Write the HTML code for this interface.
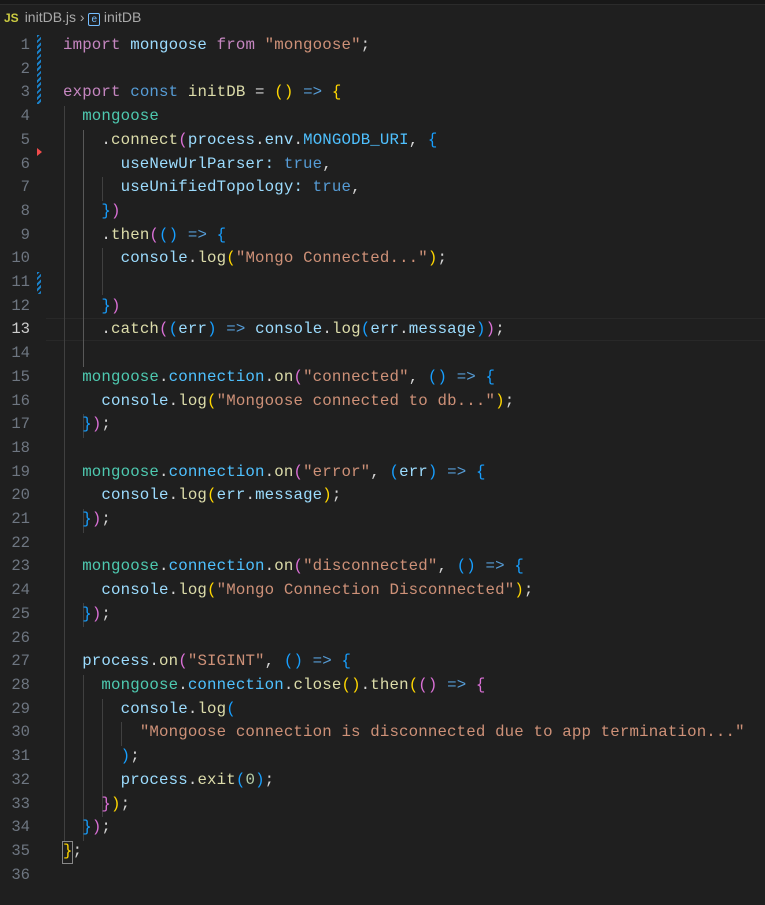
<!DOCTYPE html>
<html><head><meta charset="utf-8"><style>
html,body{margin:0;padding:0;background:#1f1f1f;width:765px;height:905px;overflow:hidden;}
body{position:relative;font-family:"Liberation Mono",monospace;}
.top{position:absolute;left:0;top:0;width:765px;height:4px;background:#181818;border-bottom:1px solid #2b2b2b;}
.bc{position:absolute;left:4px;top:9px;font-family:"Liberation Sans",sans-serif;font-size:14px;color:#a9a9a9;white-space:nowrap;}
.bc .js{color:#cbcb41;font-weight:bold;font-size:12px;margin-right:6px;}
.ln{position:absolute;left:0;width:30px;text-align:right;color:#6e7681;font-size:15.55px;line-height:23.71px;}
.code{position:absolute;left:63px;font-size:15.75px;letter-spacing:0.15px;line-height:23.71px;white-space:pre;color:#d4d4d4;}
.g{position:absolute;width:1px;background:#404040;}
.k{color:#c586c0}.b{color:#569cd6}.v{color:#9cdcfe}.f{color:#dcdcaa}.s{color:#ce9178}.t{color:#4ec9b0}.c{color:#4fc1ff}.n{color:#b5cea8}
.y{color:#ffd700}.p{color:#da70d6}.u{color:#179fff}
.hl{position:absolute;left:46px;width:719px;height:21px;border-top:1px solid #282828;border-bottom:1px solid #282828;}
.hatch{position:absolute;left:37px;width:4px;background:repeating-linear-gradient(135deg,#1b81c8 0 2px,transparent 2px 4px);}
</style></head><body>
<div class="top"></div>
<div class="bc"><span class="js">JS</span>initDB.js &#8250; <span style="color:#75beff;border:1px solid #75beff;font-size:10px;padding:0 2px;border-radius:2px">e</span> initDB</div>
<div class="hl" style="top:318px"></div>
<div class="hatch" style="top:35px;height:69px"></div>
<div class="hatch" style="top:272px;height:22px"></div>
<div style="position:absolute;left:37px;top:148px;width:0;height:0;border-top:4px solid transparent;border-bottom:4px solid transparent;border-left:5px solid #f14c4c"></div>
<div class="g" style="left:64px;top:106px;height:735px"></div>
<div class="g" style="left:83px;top:130px;height:237px;background:#585858"></div>
<div class="g" style="left:102px;top:177px;height:24px"></div>
<div class="g" style="left:102px;top:248px;height:47px"></div>
<div class="g" style="left:83px;top:414px;height:24px"></div>
<div class="g" style="left:83px;top:509px;height:24px"></div>
<div class="g" style="left:83px;top:603px;height:24px"></div>
<div class="g" style="left:83px;top:675px;height:166px"></div>
<div class="g" style="left:102px;top:699px;height:118px"></div>
<div class="g" style="left:121px;top:722px;height:24px"></div>
<div style="position:absolute;left:62px;top:841px;width:9px;height:21px;border:1px solid #888"></div>
<div class="ln" style="top:34px">1<br>2<br>3<br>4<br>5<br>6<br>7<br>8<br>9<br>10<br>11<br>12<br><span style="color:#ccc">13</span><br>14<br>15<br>16<br>17<br>18<br>19<br>20<br>21<br>22<br>23<br>24<br>25<br>26<br>27<br>28<br>29<br>30<br>31<br>32<br>33<br>34<br>35<br>36</div>
<div class="code" style="top:34px"><span class="k">import</span> <span class="v">mongoose</span> <span class="k">from</span> <span class="s">"mongoose"</span>;

<span class="k">export</span> <span class="b">const</span> <span class="f">initDB</span> = <span class="y">()</span> <span class="b">=&gt;</span> <span class="y">{</span>
  <span class="t">mongoose</span>
    .<span class="f">connect</span><span class="p">(</span><span class="v">process</span>.<span class="v">env</span>.<span class="c">MONGODB_URI</span>, <span class="u">{</span>
      <span class="v">useNewUrlParser</span><span class="v">:</span> <span class="b">true</span>,
      <span class="v">useUnifiedTopology</span><span class="v">:</span> <span class="b">true</span>,
    <span class="u">}</span><span class="p">)</span>
    .<span class="f">then</span><span class="p">(</span><span class="u">()</span> <span class="b">=&gt;</span> <span class="u">{</span>
      <span class="v">console</span>.<span class="f">log</span><span class="y">(</span><span class="s">"Mongo Connected..."</span><span class="y">)</span>;

    <span class="u">}</span><span class="p">)</span>
    .<span class="f">catch</span><span class="p">(</span><span class="u">(</span><span class="v">err</span><span class="u">)</span> <span class="b">=&gt;</span> <span class="v">console</span>.<span class="f">log</span><span class="u">(</span><span class="v">err</span>.<span class="v">message</span><span class="u">)</span><span class="p">)</span>;

  <span class="t">mongoose</span>.<span class="c">connection</span>.<span class="f">on</span><span class="p">(</span><span class="s">"connected"</span>, <span class="u">()</span> <span class="b">=&gt;</span> <span class="u">{</span>
    <span class="v">console</span>.<span class="f">log</span><span class="y">(</span><span class="s">"Mongoose connected to db..."</span><span class="y">)</span>;
  <span class="u">}</span><span class="p">)</span>;

  <span class="t">mongoose</span>.<span class="c">connection</span>.<span class="f">on</span><span class="p">(</span><span class="s">"error"</span>, <span class="u">(</span><span class="v">err</span><span class="u">)</span> <span class="b">=&gt;</span> <span class="u">{</span>
    <span class="v">console</span>.<span class="f">log</span><span class="y">(</span><span class="v">err</span>.<span class="v">message</span><span class="y">)</span>;
  <span class="u">}</span><span class="p">)</span>;

  <span class="t">mongoose</span>.<span class="c">connection</span>.<span class="f">on</span><span class="p">(</span><span class="s">"disconnected"</span>, <span class="u">()</span> <span class="b">=&gt;</span> <span class="u">{</span>
    <span class="v">console</span>.<span class="f">log</span><span class="y">(</span><span class="s">"Mongo Connection Disconnected"</span><span class="y">)</span>;
  <span class="u">}</span><span class="p">)</span>;

  <span class="v">process</span>.<span class="f">on</span><span class="p">(</span><span class="s">"SIGINT"</span>, <span class="u">()</span> <span class="b">=&gt;</span> <span class="u">{</span>
    <span class="t">mongoose</span>.<span class="c">connection</span>.<span class="f">close</span><span class="y">()</span>.<span class="f">then</span><span class="y">(</span><span class="p">()</span> <span class="b">=&gt;</span> <span class="p">{</span>
      <span class="v">console</span>.<span class="f">log</span><span class="u">(</span>
        <span class="s">"Mongoose connection is disconnected due to app termination..."</span>
      <span class="u">)</span>;
      <span class="v">process</span>.<span class="f">exit</span><span class="u">(</span><span class="n">0</span><span class="u">)</span>;
    <span class="p">}</span><span class="y">)</span>;
  <span class="u">}</span><span class="p">)</span>;
<span class="y">}</span>;
</div>
</body></html>
